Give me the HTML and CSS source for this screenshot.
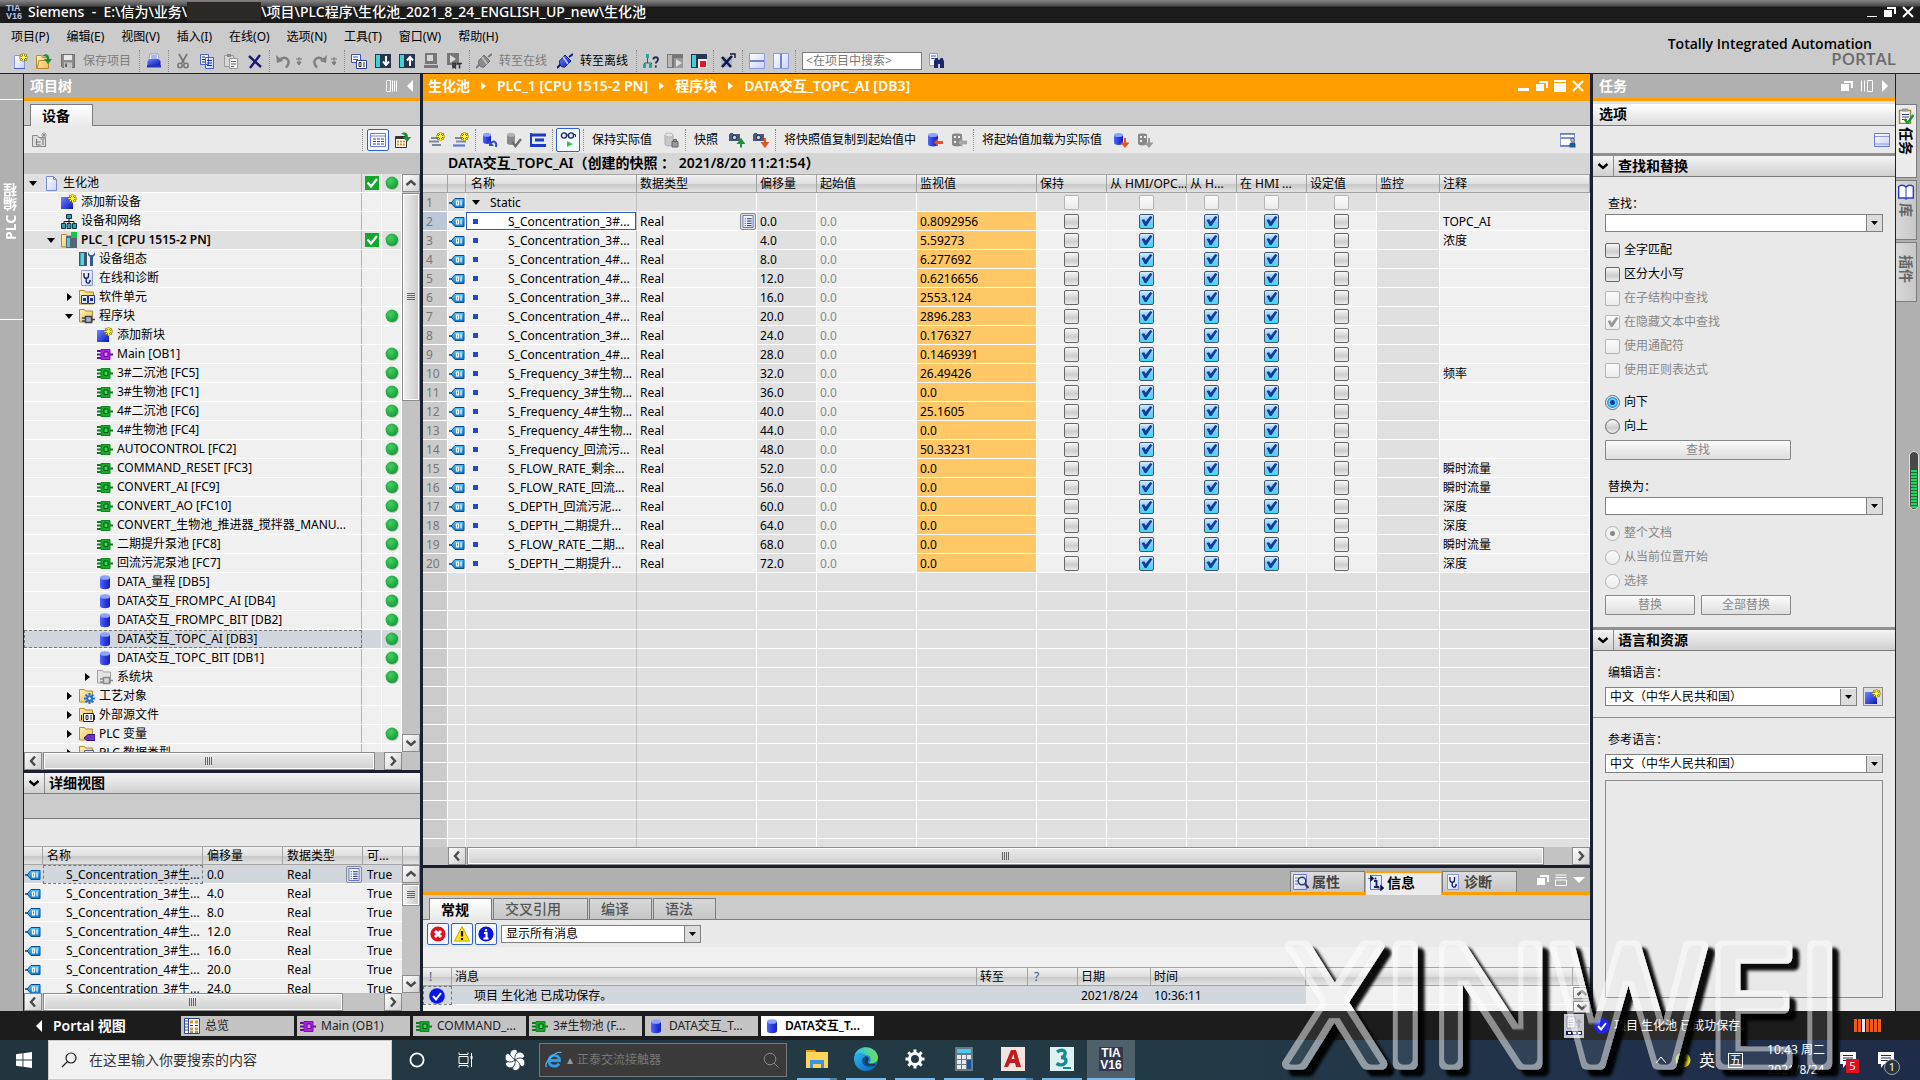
FILE: index.html
```html
<!DOCTYPE html>
<html lang="zh-CN">

<head>
  <meta charset="UTF-8">
  <title>Siemens - 生化池</title>
  <link rel="stylesheet" href="styles.css">
</head>

<body>
  <!-- Icon sprite -->
  <svg class="sprite" aria-hidden="true">
    <defs>
      <linearGradient id="g-blue" x1="0" y1="0" x2="1" y2="1"><stop offset="0" stop-color="#6f86ff"/><stop offset="1" stop-color="#0a18b8"/></linearGradient>
      <linearGradient id="g-db" x1="0" y1="0" x2="1" y2="0"><stop offset="0" stop-color="#5068f4"/><stop offset=".5" stop-color="#2a3ce4"/><stop offset="1" stop-color="#1424b0"/></linearGradient>
      <linearGradient id="g-folder" x1="0" y1="0" x2="1" y2="1"><stop offset="0" stop-color="#fff2b8"/><stop offset="1" stop-color="#e8bd5a"/></linearGradient>
      <linearGradient id="g-page" x1="0" y1="0" x2="1" y2="1"><stop offset="0" stop-color="#fff"/><stop offset="1" stop-color="#c8d2f8"/></linearGradient>
      <linearGradient id="g-tag" x1="0" y1="0" x2="0" y2="1"><stop offset="0" stop-color="#4cc4ff"/><stop offset="1" stop-color="#0b7ad0"/></linearGradient>
      <radialGradient id="g-dot" cx=".4" cy=".35" r=".7"><stop offset="0" stop-color="#45cf62"/><stop offset="1" stop-color="#129a35"/></radialGradient>
      <linearGradient id="g-edge" x1="0" y1="0" x2="1" y2="1"><stop offset="0" stop-color="#35c1f1"/><stop offset=".5" stop-color="#1b8fdb"/><stop offset="1" stop-color="#0c59a4"/></linearGradient>
      <linearGradient id="g-edge2" x1="0" y1="0" x2="1" y2="0"><stop offset="0" stop-color="#2fc3ef"/><stop offset="1" stop-color="#6fe05a"/></linearGradient>
      <filter id="emboss" x="-5%" y="-10%" width="112%" height="125%">
        <feMorphology in="SourceAlpha" operator="erode" radius="5" result="inner"/>
        <feComposite in="SourceAlpha" in2="inner" operator="out" result="ring"/>
        <feFlood flood-color="#fff" flood-opacity=".5"/>
        <feComposite in2="ring" operator="in" result="outline"/>
        <feFlood flood-color="#fff" flood-opacity=".08"/>
        <feComposite in2="inner" operator="in" result="body"/>
        <feGaussianBlur in="SourceAlpha" stdDeviation="1.5"/>
        <feOffset dx="7" dy="7"/>
        <feComposite in2="SourceAlpha" operator="out" result="cast"/>
        <feFlood flood-color="#000" flood-opacity=".95"/>
        <feComposite in2="cast" operator="in" result="shadow"/>
        <feMerge><feMergeNode in="shadow"/><feMergeNode in="body"/><feMergeNode in="outline"/></feMerge>
      </filter>
    </defs>

    <symbol id="i-star" viewBox="0 0 16 16"><path d="M11.5 0v9M7 4.5h9M8.3 1.3l6.4 6.4M14.7 1.3L8.3 7.7" stroke="#8a8200" stroke-width="1.8"/><path d="M11.5 .5v8M7.5 4.5h8M8.8 1.8l5.4 5.4M14.2 1.8L8.8 7.2" stroke="#fff23a" stroke-width="1"/></symbol>
    <symbol id="i-new" viewBox="0 0 16 16"><path d="M2.5 2.5h7l3 3v10h-10z" fill="url(#g-page)" stroke="#8a9ae0"/><path d="M2 15.5h11" stroke="#4a5fd0"/><use href="#i-star"/></symbol>
    <symbol id="i-open" viewBox="0 0 16 16"><path d="M.5 2.5h5l1 2h6v11h-12z" fill="url(#g-folder)" stroke="#b98a2c"/><path d="M1 15.5l2-8h9" fill="none" stroke="#b98a2c"/><path d="M6 3c4-3 7-2 7.5 3H16l-4 5-4-5h3C10.5 3.5 9 2.5 6 3z" fill="#1d8f3c"/></symbol>
    <symbol id="i-save" viewBox="0 0 16 16"><path d="M1.5 1.5h13v13h-12l-1-1z" fill="#8c8c8c" stroke="#6f6f6f"/><path d="M4 2h8v5H4z" fill="#e8e8e8"/><path d="M4 9.5h8V15H4z" fill="#c4c4c4"/><path d="M5 10.5h2V14H5z" fill="#666"/></symbol>
    <symbol id="i-print" viewBox="0 0 16 16"><path d="M4 1h8l1 6H3z" fill="#fff" stroke="#7a88d0" stroke-width=".8"/><path d="M5 3h6M5 5h6" stroke="#5a6ad8"/><path d="M1.5 8l2-2h9l2 2v4h-13z" fill="url(#g-blue)"/><path d="M1 12h14v2.5H1z" fill="#2335b8"/></symbol>
    <symbol id="i-cut" viewBox="0 0 16 16"><path d="M4 1l5 9M12 1l-5 9" stroke="#777" stroke-width="1.8"/><circle cx="5" cy="12.5" r="2.2" fill="none" stroke="#777" stroke-width="1.5"/><circle cx="11" cy="12.5" r="2.2" fill="none" stroke="#777" stroke-width="1.5"/></symbol>
    <symbol id="i-copy" viewBox="0 0 16 16"><path d="M1.5 1.5h8v10h-8zM6.5 4.5h8v11h-8z" fill="url(#g-page)" stroke="#4a5fd0"/><path d="M3 4h3M3 6.5h3M3 9h3M8 7.5h5M8 10h5M8 12.5h5" stroke="#222c88"/></symbol>
    <symbol id="i-paste" viewBox="0 0 16 16"><path d="M1.5 2.5h9v11h-9z" fill="#d8d8d8" stroke="#9a9a9a"/><path d="M4 1h4v3H4z" fill="#888"/><path d="M6.5 5.5h8v10h-8z" fill="#f2f2f2" stroke="#9a9a9a"/><path d="M8 8.5h5M8 11h5M8 13.5h3" stroke="#666"/></symbol>
    <symbol id="i-x" viewBox="0 0 16 16"><path d="M2 3l12 11M13 2L3 15" stroke="#1a1a72" stroke-width="2.4"/></symbol>
    <symbol id="i-undo" viewBox="0 0 16 16"><path d="M4 6.500c6-4.500 12 1 6 8" fill="none" stroke="#808080" stroke-width="2.4"/><path d="M0 2l1 8 6-2z" fill="#808080"/></symbol>
    <symbol id="i-redo" viewBox="0 0 16 16"><path d="M12 6.500C6 2 0 7.500 6 14.500" fill="none" stroke="#808080" stroke-width="2.4"/><path d="M16 2l-1 8-6-2z" fill="#808080"/></symbol>
    <symbol id="i-drop" viewBox="0 0 8 16"><path d="M4 4v4M1 6h6M2 9h4l-2 3z" fill="#777" stroke="#777"/></symbol>
    <symbol id="i-compile" viewBox="0 0 16 16"><path d="M.5 1.5h9v8h-9z" fill="#fff" stroke="#3a4fc0"/><path d="M2 4h5M2 6.5h5" stroke="#3a4fc0"/><path d="M5.5 7.5h10v8h-10z" fill="#fff" stroke="#2a3f98"/><path d="M8 9.5h2v4H8zM13 9v5" fill="none" stroke="#222"/></symbol>
    <symbol id="i-down" viewBox="0 0 16 16"><path d="M0 1h16v14H0z" fill="#28354e"/><path d="M1 2h4v12H1z" fill="#3fd0d8"/><path d="M11 3v8M8 8.5l3 3.5 3-3.5" fill="none" stroke="#fff" stroke-width="2"/></symbol>
    <symbol id="i-up" viewBox="0 0 16 16"><path d="M0 1h16v14H0z" fill="#28354e"/><path d="M1 2h4v12H1z" fill="#3fd0d8"/><path d="M11 13V5M8 7.5L11 4l3 3.5" fill="none" stroke="#fff" stroke-width="2"/></symbol>
    <symbol id="i-sim" viewBox="0 0 16 16"><path d="M2 0h12v11H2z" fill="#777"/><path d="M4 2h6v6H4z" fill="#d4d4d4"/><path d="M1 12h14v3H1z" fill="#777"/></symbol>
    <symbol id="i-rt" viewBox="0 0 16 16"><path d="M0 0h12v12H0z" fill="#777"/><path d="M3 2l6 4-6 4z" fill="#ddd"/><path d="M6 15.5v-5h2.5v2.5H6.500l2.500 2.500M10 10.5h5M12.5 10.5v5" fill="none" stroke="#333" stroke-width="1.5"/></symbol>
    <symbol id="i-plug-g" viewBox="0 0 16 16"><path d="M0 15l4-4M12 4l4-3" stroke="#777" stroke-width="2"/><path d="M2.5 8l5.5-6 6 6-6 6c-3 1-6-2-5.5-6z" fill="#8c8c8c" stroke="#6c6c6c"/><path d="M6 4l5 7" stroke="#c4c4c4" stroke-width="1.5"/></symbol>
    <symbol id="i-plug" viewBox="0 0 16 16"><path d="M0 15l4-4M12 4l4-3" stroke="#101a80" stroke-width="2"/><path d="M2.5 8l5.5-6 6 6-6 6c-3 1-6-2-5.5-6z" fill="url(#g-blue)" stroke="#101a80"/><path d="M6 4l5 7" stroke="#cfd8ff" stroke-width="1.3"/></symbol>
    <symbol id="i-nethelp" viewBox="0 0 16 16"><path d="M4.5 4v6M1.5 14v-4h7v4" fill="none" stroke="#1d6a6a"/><path d="M3 1h3v4H3zM0 11h3v4H0zM6 11h3v4H6z" fill="#1fa89c"/><path d="M10.5 6.500c0-3 4.500-3 4.500 0 0 2-2.200 2-2.200 4M12.800 12.500v2" fill="none" stroke="#222b55" stroke-width="1.8"/></symbol>
    <symbol id="i-start" viewBox="0 0 16 16"><path d="M0 1h16v14H0z" fill="#777"/><path d="M1 2h4v12H1z" fill="#b8b8b8"/><path d="M7 5h9v10H7z" fill="#999"/><path d="M9 6l6 4-6 4z" fill="#ddd"/></symbol>
    <symbol id="i-stop" viewBox="0 0 16 16"><path d="M0 1h16v14H0z" fill="#28354e"/><path d="M1 2h4v12H1z" fill="#3fd0d8"/><path d="M7 6h9v9H7z" fill="#eee"/><path d="M9 8h6v6H9z" fill="#e8141c"/></symbol>
    <symbol id="i-xref" viewBox="0 0 16 16"><path d="M1 4h11v10H1z" fill="#a8b4dc"/><path d="M2 4l9 10M12 3L2 14" stroke="#14143c" stroke-width="2.6"/><path d="M10 1h5v4" fill="none" stroke="#14143c" stroke-width="1.4"/></symbol>
    <symbol id="i-splith" viewBox="0 0 16 16"><path d="M.5 .5h15v15H.5z" fill="url(#g-page)" stroke="#8a9ae0"/><path d="M1 8h14" stroke="#4a5fd0" stroke-width="1.5"/></symbol>
    <symbol id="i-splitv" viewBox="0 0 16 16"><path d="M.5 .5h15v15H.5z" fill="url(#g-page)" stroke="#8a9ae0"/><path d="M8 1v14" stroke="#4a5fd0" stroke-width="1.5"/></symbol>
    <symbol id="i-find" viewBox="0 0 16 16"><path d="M.5 .5h8v12h-8z" fill="#f2f4ff" stroke="#8a9ae0"/><path d="M2 3h5M2 5.5h5" stroke="#4a5fd0"/><path d="M5 8l1.500-3h2l1 2h1l1-2h2L15 8v7h-4v-4H9v4H5z" fill="#1c2768"/></symbol>

    <symbol id="i-tree-new" viewBox="0 0 16 16"><path d="M.5 3.5h5l1 2h7v9H.5z" fill="#ddd" stroke="#8a8a8a"/><path d="M4.5 7v6h4M4.5 10h4M11 8v5M8.5 7h4" fill="none" stroke="#777"/><path d="M12 0v6M9 3h6M10 1l4 4M14 1l-4 4" stroke="#888" stroke-width=".8"/></symbol>
    <symbol id="i-grid" viewBox="0 0 16 16"><path d="M.5 1.5h15v13H.5z" fill="#fff" stroke="#6a7ad0"/><path d="M1 4h14" stroke="#b4bff0" stroke-width="2"/><path d="M3 7h3M7 7h3M11 7h3M3 9.5h3M7 9.5h3M11 9.5h3M3 12h3M7 12h3M11 12h3" stroke="#39407c"/></symbol>
    <symbol id="i-gridgo" viewBox="0 0 16 16"><path d="M.5 4.5h11v11H.5z" fill="#fff" stroke="#333"/><path d="M1 6h10" stroke="#333" stroke-width="2"/><path d="M2 9.5h2M5 9.5h2M8 9.5h2M2 12.5h2M5 12.5h2M8 12.5h2" stroke="#e8902a" stroke-width="2"/><path d="M6 2c4-3 7-1 7 3h3l-4 5-4-5h2C10 3 8.500 2 6 2z" fill="#1d8f3c"/></symbol>

    <symbol id="i-page" viewBox="0 0 16 16"><path d="M3.5 1.5h7l3 3v11h-10z" fill="url(#g-page)" stroke="#7a8ad8"/><path d="M10.5 1.5v3h3" fill="none" stroke="#7a8ad8"/></symbol>
    <symbol id="i-add" viewBox="0 0 16 16"><path d="M0 3h12v12H0z" fill="url(#g-blue)"/><use href="#i-star"/></symbol>
    <symbol id="i-net" viewBox="0 0 16 16"><path d="M8 5v4M3 12V8.5h10V12M8 8v5" fill="none" stroke="#111"/><path d="M5.5 1.5h5v4h-5zM.5 10.5h4v5h-4zM6 10.5h4v5H6zM11.5 10.5h4v5h-4z" fill="#3aa0a8" stroke="#12304a"/></symbol>
    <symbol id="i-plc" viewBox="0 0 16 16"><path d="M.5 2.5h5l1 1.5h5v11H.5z" fill="url(#g-folder)" stroke="#b98a2c"/><path d="M5 4h11v12H5z" fill="#5a6478"/><path d="M6 6h3v9H6z" fill="#3fd0d8"/><path d="M10 0h6v6h-6z" fill="#0fc840"/></symbol>
    <symbol id="i-conf" viewBox="0 0 16 16"><path d="M0 1h8v14H0z" fill="#465468"/><path d="M1.5 2H5v12H1.5z" fill="#3fe0ea"/><path d="M9 1v3l2 2v9h3V6l2-2V1l-2 3h-3z" fill="#2c5c98"/></symbol>
    <symbol id="i-diag" viewBox="0 0 16 16"><path d="M2.5 .5h11v15h-11z" fill="url(#g-page)" stroke="#8a9ae0"/><path d="M5 3v3c0 3 4.500 3 4.500 0V3M7.200 8.500v3c0 2 3 2 3.500 .5" fill="none" stroke="#111a50" stroke-width="1.3"/><circle cx="11" cy="11" r="1" fill="#111a50"/></symbol>
    <symbol id="i-unit" viewBox="0 0 16 16"><path d="M.5 1.5h5l1 1.5h8v12H.5z" fill="url(#g-folder)" stroke="#b98a2c"/><path d="M2.5 6.5h6v8h-6zM9.5 6.5h6v8h-6z" fill="#dfe6ff" stroke="#24348c"/><path d="M4 9h3v3H4zM11 9h3v3h-3z" fill="#24348c"/></symbol>
    <symbol id="i-blocks" viewBox="0 0 16 16"><path d="M.5 1.5h5l1 1.5h7v11H.5z" fill="url(#g-folder)" stroke="#b98a2c"/><path d="M3 10h3M3 13h3M13 11.5h3" stroke="#39435c" stroke-width="1.5"/><path d="M6.500 8.500h6v6h-6z" fill="#aab4c8" stroke="#39435c" stroke-width="1.5"/></symbol>
    <symbol id="i-sysblocks" viewBox="0 0 16 16"><path d="M.5 1.5h5l1 1.5h7v11H.5z" fill="#e4e4e4" stroke="#a0a0a0"/><path d="M3 10h3M3 13h3M13 11.5h3" stroke="#8a8a8a" stroke-width="1.5"/><path d="M6.500 8.500h6v6h-6z" fill="#d8d8d8" stroke="#8a8a8a" stroke-width="1.5"/></symbol>
    <symbol id="i-ob" viewBox="0 0 16 16"><path d="M0 5h4M0 8.500h4M0 12h4M12 8.500h4" stroke="#6a0c9c" stroke-width="1.8"/><path d="M4 3.500h9v10H4z" fill="#b01ee8" stroke="#7a10b0"/><path d="M7 6h4v4.500H7z" fill="#d87cf8" stroke="#5c0888"/></symbol>
    <symbol id="i-fc" viewBox="0 0 16 16"><path d="M0 5h4M0 8.500h4M0 12h4M12 8.500h4" stroke="#0a7a1a" stroke-width="1.8"/><path d="M4 3.500h9v10H4z" fill="#17a82c" stroke="#0c8a1c"/><path d="M7 6h4v4.500H7z" fill="#2ce04a" stroke="#08501a"/></symbol>
    <symbol id="i-db" viewBox="0 0 16 16"><path d="M3 3.500v9.500c0 3 10 3 10 0V3.500z" fill="url(#g-db)"/><ellipse cx="8" cy="3.500" rx="5" ry="2.3" fill="#8fa0ff"/></symbol>
    <symbol id="i-tech" viewBox="0 0 16 16"><path d="M.5 1.5h5l1 1.5h7v11H.5z" fill="url(#g-folder)" stroke="#b98a2c"/><path d="M10.5 5v11M5 10.5h11M6.600 6.600l7.800 7.800M14.400 6.600l-7.800 7.800" stroke="#1f70d8" stroke-width="2"/><circle cx="10.5" cy="10.5" r="1.2" fill="#fff"/></symbol>
    <symbol id="i-ext" viewBox="0 0 16 16"><path d="M.5 1.5h5l1 1.5h7v11H.5z" fill="url(#g-folder)" stroke="#b98a2c"/><path d="M4.5 6.5h10v8h-10z" fill="#fff" stroke="#223"/><path d="M7 8.5h2v4H7zM12 8v5" fill="none" stroke="#223"/><path d="M2.5 8v5M15.5 8v5" stroke="#223"/></symbol>
    <symbol id="i-var" viewBox="0 0 16 16"><path d="M.5 1.5h5l1 1.5h7v11H.5z" fill="url(#g-folder)" stroke="#b98a2c"/><path d="M5 12l4-3.500h7v6H8z" fill="#6a34c8" stroke="#341478"/></symbol>
    <symbol id="i-types" viewBox="0 0 16 16"><path d="M.5 1.5h5l1 1.5h7v11H.5z" fill="url(#g-folder)" stroke="#b98a2c"/><path d="M5.5 5.5h9v9h-9z" fill="#dfe6ff" stroke="#4a5fc0"/></symbol>
    <symbol id="i-ok" viewBox="0 0 14 14"><path d="M0 0h14v14H0z" fill="#12a82c"/><path d="M2.5 6.500l3.500 4 6-7.500" fill="none" stroke="#fff" stroke-width="2.2"/></symbol>
    <symbol id="i-dot" viewBox="0 0 14 14"><circle cx="7.4" cy="7.4" r="6.4" fill="#a8b8ac"/><circle cx="6.8" cy="6.8" r="6.2" fill="url(#g-dot)"/></symbol>
    <symbol id="i-tag" viewBox="0 0 16 16"><path d="M0 8h3" stroke="#0a3c70" stroke-width="1.5"/><path d="M2 8l4-4.500h9v9H6z" fill="url(#g-tag)" stroke="#0a4c8c"/><path d="M7.500 6h2v4h-2zM12 5.500v5" fill="none" stroke="#fff" stroke-width="1.2"/></symbol>
    <symbol id="i-list" viewBox="0 0 12 14"><path d="M.5 .5h11v13H.5z" fill="#eef1ff" stroke="#5a6ad0"/><path d="M2.5 4h1M2.5 6.5h1M2.5 9h1M2.5 11.5h1M5 4h5M5 6.5h5M5 9h5M5 11.5h5" stroke="#1c2460"/></symbol>

    <symbol id="i-addrow" viewBox="0 0 16 16"><path d="M2 6h8M0 9.5h10M3 13h9" stroke="#7c889c" stroke-width="2.2"/><use href="#i-star"/></symbol>
    <symbol id="i-addrow2" viewBox="0 0 16 16"><path d="M2 6h8M3 9.5h10" stroke="#7c889c" stroke-width="2.2"/><path d="M0 13.5h12" stroke="#5c78d8" stroke-width="2.2"/><use href="#i-star"/></symbol>
    <symbol id="i-dbundo" viewBox="0 0 16 16"><path d="M1 3v7c0 2.500 8 2.500 8 0V3z" fill="url(#g-db)"/><ellipse cx="5" cy="2.8" rx="4" ry="2" fill="#8fa0ff"/><path d="M9 11c3-3 6-1 5 4" fill="none" stroke="#2a50c0" stroke-width="2"/><path d="M7 8v6h5z" fill="#2a50c0"/></symbol>
    <symbol id="i-dbok" viewBox="0 0 16 16"><path d="M1 3v8c0 2.500 8 2.500 8 0V3z" fill="#888"/><ellipse cx="5" cy="2.8" rx="4" ry="2" fill="#b4b4b4"/><path d="M6 10l3.500 4L15 7" fill="none" stroke="#6c6c6c" stroke-width="2.4"/></symbol>
    <symbol id="i-lines" viewBox="0 0 16 16"><path d="M1 1v14" stroke="#1c3cc8" stroke-width="2"/><path d="M1 3h15M5 8h9M1 13.500h15" stroke="#1c3cc8" stroke-width="3"/></symbol>
    <symbol id="i-glasses" viewBox="0 0 16 16"><circle cx="4" cy="3.5" r="2.6" fill="#e8eeff" stroke="#1c2a5c" stroke-width="1.4"/><circle cx="11" cy="3.5" r="2.6" fill="#e8eeff" stroke="#1c2a5c" stroke-width="1.4"/><path d="M6.5 3h2M13.5 2.5h2V5" fill="none" stroke="#1c2a5c"/><path d="M7 9l6 3-6 3z" fill="#2cc84c"/></symbol>
    <symbol id="i-dblock" viewBox="0 0 16 16"><path d="M2 3v9c0 2.500 8 2.500 8 0V3z" fill="#c8c8c8" stroke="#aaa"/><ellipse cx="6" cy="3" rx="4" ry="2" fill="#e4e4e4" stroke="#aaa" stroke-width=".7"/><path d="M9 9.5h6V15H9zM10.5 9.5v-2h3v2" fill="#999" stroke="#666"/></symbol>
    <symbol id="i-camup" viewBox="0 0 16 16"><path d="M0 2h11v7H0z" fill="#4c5a78"/><path d="M1 1h3v1H1z" fill="#4c5a78"/><circle cx="5.5" cy="5.5" r="2.2" fill="#c8d4f0" stroke="#1c2440"/><path d="M12 15.5V11M9.500 11L12 7.500l2.500 3.500z" stroke="#1a9440" stroke-width="2" fill="#1a9440"/></symbol>
    <symbol id="i-camdn" viewBox="0 0 16 16"><path d="M0 2h11v7H0z" fill="#4c5a78"/><path d="M1 1h3v1H1z" fill="#4c5a78"/><circle cx="5.5" cy="5.5" r="2.2" fill="#c8d4f0" stroke="#1c2440"/><path d="M12 6v5M9.500 11h5L12 14.500z" stroke="#e05820" stroke-width="2" fill="#e05820"/></symbol>
    <symbol id="i-dbleft" viewBox="0 0 16 16"><path d="M1 3v9.500c0 2.500 10 2.500 10 0V3z" fill="url(#g-db)"/><ellipse cx="6" cy="3" rx="5" ry="2" fill="#8fa0ff"/><path d="M7 10.5l4-4v2.500h5v3h-5v2.500z" fill="#e85420"/></symbol>
    <symbol id="i-dbleftg" viewBox="0 0 16 16"><path d="M1 2.500c0-1.500 10-1.500 10 0v10c0 2.500-10 2.500-10 0z" fill="#888"/><path d="M3 4h2v2H3zM3 9h2v2H3zM7 4h2v2H7z" fill="#eee"/><path d="M7 10.5l4-4v2.500h5v3h-5v2.500z" fill="#aaa" stroke="#888" stroke-width=".5"/></symbol>
    <symbol id="i-dbdown" viewBox="0 0 16 16"><path d="M1 3v8c0 2.500 9 2.500 9 0V3z" fill="url(#g-db)"/><ellipse cx="5.5" cy="3" rx="4.5" ry="2" fill="#8fa0ff"/><path d="M12 6v6M9.500 11.500h5L12 14.500z" stroke="#e85420" stroke-width="2" fill="#e85420"/></symbol>
    <symbol id="i-dbdowng" viewBox="0 0 16 16"><path d="M1 2.500c0-1.500 9-1.500 9 0v9c0 2.500-9 2.500-9 0z" fill="#888"/><path d="M3 4h2v2H3zM3 8h2v2H3zM7 4h2v2H7z" fill="#eee"/><path d="M12 6v6M9.500 11.500h5L12 14.500z" stroke="#999" stroke-width="2" fill="#999"/></symbol>
    <symbol id="i-layout" viewBox="0 0 16 16"><path d="M.5 1.5h14v12H.5z" fill="#fff" stroke="#8a9ae0"/><path d="M0 2h15M1 6h13M0 14h12" stroke="#5c70c8" stroke-width="1.5"/><circle cx="12.5" cy="8" r="1.8" fill="#e8b888" stroke="#333" stroke-width=".6"/><path d="M9.5 15.5v-3c0-3 6-3 6 0v3z" fill="#145c98"/></symbol>
    <symbol id="i-window" viewBox="0 0 16 16"><path d="M.5 1.5h15v13H.5z" fill="url(#g-page)" stroke="#6a7ad8"/><path d="M1 4.5h14M1 12h14" stroke="#8a9ae8"/></symbol>

    <symbol id="i-wmin" viewBox="0 0 12 12"><path d="M0 8h11v3H0z" fill="#fff"/></symbol>
    <symbol id="i-wline" viewBox="0 0 12 12"><path d="M1 10h10v1H1z" fill="#fff"/></symbol>
    <symbol id="i-wrest" viewBox="0 0 12 12"><path d="M0 4h8v7H0zM3 1h9v7h-2V3H3z" fill="#fff"/></symbol>
    <symbol id="i-wmax" viewBox="0 0 12 12"><path d="M0 0h12v2H0zM0 3h12v9H0z" fill="#fff"/></symbol>
    <symbol id="i-wclose" viewBox="0 0 12 12"><path d="M1 1l10 10M11 1L1 11" stroke="#fff" stroke-width="2"/></symbol>
    <symbol id="i-cols" viewBox="0 0 12 12"><path d="M.5 .5v11M3.5 .5v11M6.5 .5h5v11h-5z" fill="none" stroke="#fff"/></symbol>
    <symbol id="i-cols-l" viewBox="0 0 12 12"><path d="M.5 .5h4v11h-4zM6.5 .5v11M8.5 .5v11M10.5 .5v11" fill="none" stroke="#fff"/></symbol>
    <symbol id="i-rows" viewBox="0 0 12 12"><path d="M.5 1h11M.5 3.5h11M.5 6h11v5.5H.5z" fill="none" stroke="#fff"/></symbol>
    <symbol id="i-tleft" viewBox="0 0 8 12"><path d="M7 0v12L1 6z" fill="#fff"/></symbol>
    <symbol id="i-tright" viewBox="0 0 8 12"><path d="M1 0v12l6-6z" fill="#fff"/></symbol>
    <symbol id="i-tdown" viewBox="0 0 12 12"><path d="M0 3h12L6 9z" fill="#fff"/></symbol>
    <symbol id="i-chev" viewBox="0 0 12 12"><path d="M1.5 4L6 8l4.500-4" fill="none" stroke="currentColor" stroke-width="2.4"/></symbol>

    <symbol id="i-prop" viewBox="0 0 16 16"><path d="M.5 .5h13v15H.5z" fill="url(#g-page)" stroke="#6a7ad8"/><path d="M2 4h4M2 7h3M2 10h3" stroke="#5c70d8"/><circle cx="9" cy="7" r="3.8" fill="#dfe6f4" stroke="#333b58" stroke-width="1.5"/><path d="M12 10l3.500 4" stroke="#333b58" stroke-width="2"/></symbol>
    <symbol id="i-info" viewBox="0 0 16 16"><path d="M2.5 .5h11v14h-11z" fill="url(#g-page)" stroke="#6a7ad8"/><path d="M6 6h2.500v6M6 12h5M7.500 2.500v2" fill="none" stroke="#1c2260" stroke-width="1.8"/><path d="M0 3.500h3M2.500 .5L6 3.500l-3.500 3zM9 13h4M12.500 10l3.500 3-3.500 3z" fill="#10144c" stroke="#10144c" stroke-width=".6"/></symbol>
    <symbol id="i-err" viewBox="0 0 16 16"><circle cx="8" cy="8" r="7.6" fill="#e0101c"/><path d="M5 5l6 6M11 5l-6 6" stroke="#fff" stroke-width="3"/></symbol>
    <symbol id="i-warn" viewBox="0 0 16 16"><path d="M8 .5L15.500 15H.5z" fill="#ffe60a" stroke="#c8a800"/><path d="M8 5v5.500M8 12v2" stroke="#111" stroke-width="2.2"/></symbol>
    <symbol id="i-note" viewBox="0 0 16 16"><circle cx="8" cy="8" r="7.6" fill="#0a14e0"/><path d="M6 7h2.500v5M5.500 12.500h5M8 3v2.300" fill="none" stroke="#fff" stroke-width="2.2"/></symbol>
    <symbol id="i-done" viewBox="0 0 16 16"><circle cx="8" cy="8" r="7.8" fill="#0c14e8"/><path d="M4 8l3 3.500L12 5" fill="none" stroke="#fff" stroke-width="2"/></symbol>
    <symbol id="i-task" viewBox="0 0 16 16"><path d="M1.5 2.5h11v13h-11z" fill="#fff" stroke="#a08840" stroke-width="1.5"/><path d="M4 .5h6v3H4z" fill="#999"/><path d="M4 6.500h7M4 9h7M4 11.5h5" stroke="#333c90"/><path d="M6.500 11l3 4L15.500 7" fill="none" stroke="#18942c" stroke-width="2.4"/></symbol>
    <symbol id="i-book" viewBox="0 0 16 16"><path d="M.7 2.500C3 1 6 1 8 3c2-2 5-2 7.300-.5V14H9l-1 1-1-1H.7z" fill="#fff" stroke="#2c3cc8" stroke-width="1.4"/><path d="M8 3v11" stroke="#2c3cc8"/></symbol>
    <symbol id="i-overview" viewBox="0 0 16 16"><path d="M.5 .5h15v15H.5z" fill="#fff" stroke="#2c4890"/><path d="M1 3h3M1 6h3M1 9h3M1 12h3M4.500 0v16" stroke="#2c4890"/><path d="M6 4h3M11 4h3M6 11h3M11 11h3" stroke="#d8942c" stroke-width="3"/><path d="M6 7.500h3M11 7.500h3M6 14h3M11 14h3" stroke="#333"/></symbol>
    <symbol id="i-status" viewBox="0 0 20 24"><path d="M0 0h20v24H0z" fill="#c4c4cc"/><path d="M3 3h8v11H3z" fill="#fff" stroke="#8890b0"/><path d="M4.5 6h5M4.5 8.5h5M4.5 11h5M15 14V6M12.5 9L15 5.500 17.500 9" fill="none" stroke="#8890b0"/><path d="M2 17h16v4H2z" fill="#10184c"/><path d="M4 18h3v2H4zM9 18h3v2H9zM14 18h3v2h-3z" fill="#fff"/></symbol>
  </svg>

  <header class="titlebar">
    <span class="tia-badge">TIA<br>V16</span>
    <span class="title">Siemens&nbsp; -&nbsp; E:\信为\业务\</span><span class="blot"></span><span class="title">\项目\PLC程序\生化池_2021_8_24_ENGLISH_UP_new\生化池</span>
    <div class="win-buttons">
      <button aria-label="最小化"><svg class="wicon"><use href="#i-wline"/></svg></button>
      <button aria-label="还原"><svg class="wicon"><use href="#i-wrest"/></svg></button>
      <button aria-label="关闭"><svg class="wicon"><use href="#i-wclose"/></svg></button>
    </div>
  </header>

  <div class="topbar">
    <div class="topbar-left">
      <nav class="menu">
        <button>项目(P)</button><button>编辑(E)</button><button>视图(V)</button><button>插入(I)</button><button>在线(O)</button><button>选项(N)</button><button>工具(T)</button><button>窗口(W)</button><button>帮助(H)</button>
      </nav>
      <div class="toolbar" id="main-toolbar"></div>
    </div>
    <div class="brand">
      <div class="brand-name">Totally Integrated Automation</div>
      <div class="brand-portal">PORTAL</div>
    </div>
  </div>

  <main class="workspace">
    <aside class="rail rail-left"><div class="rail-label">PLC 编程</div></aside>

    <section class="left">
      <div class="panel-head">
        <span>项目树</span>
        <svg class="wicon"><use href="#i-cols-l"/></svg>
        <svg class="wicon narrow"><use href="#i-tleft"/></svg>
      </div>
      <div class="tabstrip"><button class="tab active">设备</button></div>
      <div class="panel-tools">
        <button class="tool" aria-label="新建组"><svg class="icon"><use href="#i-tree-new"/></svg></button>
        <span class="spacer"></span><span class="sep"></span>
        <button class="tool pressed" aria-label="详细"><svg class="icon"><use href="#i-grid"/></svg></button>
        <button class="tool" aria-label="总览"><svg class="icon"><use href="#i-gridgo"/></svg></button>
      </div>
      <div class="band"></div>
      <div class="tree-area">
        <div class="tree" id="tree"></div>
        <div class="vscroll">
          <button class="sbtn up" aria-label="向上滚动"><svg class="wicon"><use href="#i-chev"/></svg></button>
          <div class="thumb tree-thumb"><i class="grip"></i></div>
          <span class="spacer"></span>
          <button class="sbtn" aria-label="向下滚动"><svg class="wicon"><use href="#i-chev"/></svg></button>
        </div>
      </div>
      <div class="hscroll tree-hscroll">
        <button class="sbtn prev" aria-label="向左滚动"><svg class="wicon"><use href="#i-chev"/></svg></button>
        <div class="thumb"><i class="grip"></i></div>
        <button class="sbtn next" aria-label="向右滚动"><svg class="wicon"><use href="#i-chev"/></svg></button>
      </div>

      <div class="detail">
        <h2 class="section-head"><span class="fold"><svg class="wicon"><use href="#i-chev"/></svg></span>详细视图</h2>
        <div class="detail-strip"></div>
        <div class="detail-tools"></div>
        <div class="detail-area">
          <table class="grid detail-table">
            <colgroup><col class="d-icon"><col class="d-name"><col class="d-off"><col class="d-type"><col class="d-vis"><col></colgroup>
            <thead><tr><th></th><th>名称</th><th>偏移量</th><th>数据类型</th><th>可...</th><th></th></tr></thead>
            <tbody id="detail-rows"></tbody>
          </table>
          <div class="vscroll over">
            <button class="sbtn up" aria-label="向上滚动"><svg class="wicon"><use href="#i-chev"/></svg></button>
            <div class="thumb detail-thumb"><i class="grip"></i></div>
            <span class="spacer"></span>
            <button class="sbtn" aria-label="向下滚动"><svg class="wicon"><use href="#i-chev"/></svg></button>
          </div>
        </div>
        <div class="hscroll detail-hscroll">
          <button class="sbtn prev" aria-label="向左滚动"><svg class="wicon"><use href="#i-chev"/></svg></button>
          <div class="thumb"><i class="grip"></i></div>
          <span class="spacer"></span>
          <button class="sbtn next" aria-label="向右滚动"><svg class="wicon"><use href="#i-chev"/></svg></button>
        </div>
      </div>
    </section>

    <section class="center">
      <div class="editor">
        <div class="editor-head">
          <div class="crumbs"><span>生化池</span><i></i><span>PLC_1 [CPU 1515-2 PN]</span><i></i><span>程序块</span><i></i><span>DATA交互_TOPC_AI [DB3]</span></div>
          <div class="win-buttons">
            <button aria-label="最小化"><svg class="wicon"><use href="#i-wmin"/></svg></button>
            <button aria-label="浮动"><svg class="wicon"><use href="#i-wrest"/></svg></button>
            <button aria-label="最大化"><svg class="wicon"><use href="#i-wmax"/></svg></button>
            <button aria-label="关闭"><svg class="wicon"><use href="#i-wclose"/></svg></button>
          </div>
        </div>
        <div class="tabstrip"></div>
        <div class="editor-tools" id="editor-toolbar"></div>
        <h1 class="editor-title">DATA交互_TOPC_AI（创建的快照&nbsp;：&nbsp;2021/8/20 11:21:54）</h1>
        <div class="table-area">
          <table class="grid data-table">
            <colgroup><col class="c-num"><col class="c-icon"><col class="c-name"><col class="c-type"><col class="c-off"><col class="c-start"><col class="c-mon"><col class="c-keep"><col class="c-opc"><col class="c-h"><col class="c-inhmi"><col class="c-set"><col class="c-sup"><col></colgroup>
            <thead>
              <tr><th></th><th></th><th>名称</th><th>数据类型</th><th>偏移量</th><th>起始值</th><th>监视值</th><th>保持</th><th>从 HMI/OPC...</th><th>从 H...</th><th>在 HMI ...</th><th>设定值</th><th>监控</th><th>注释</th></tr>
            </thead>
            <tbody id="data-rows"></tbody>
          </table>
        </div>
        <div class="hscroll editor-hscroll">
          <button class="sbtn prev" aria-label="向左滚动"><svg class="wicon"><use href="#i-chev"/></svg></button>
          <div class="thumb"><i class="grip"></i></div>
          <button class="sbtn next" aria-label="向右滚动"><svg class="wicon"><use href="#i-chev"/></svg></button>
        </div>
      </div>

      <div class="inspector">
        <div class="insp-head">
          <button class="insp-tab"><svg class="icon"><use href="#i-prop"/></svg>属性</button>
          <button class="insp-tab active"><svg class="icon"><use href="#i-info"/></svg>信息</button>
          <button class="insp-tab"><svg class="icon"><use href="#i-diag"/></svg>诊断</button>
          <div class="insp-icons"><svg class="wicon"><use href="#i-wrest"/></svg><svg class="wicon"><use href="#i-rows"/></svg><svg class="wicon"><use href="#i-tdown"/></svg></div>
        </div>
        <div class="tabstrip sub">
          <button class="tab active">常规</button><button class="tab wide">交叉引用</button><button class="tab">编译</button><button class="tab">语法</button>
        </div>
        <div class="msg-tools">
          <button class="tool pressed" aria-label="错误"><svg class="icon"><use href="#i-err"/></svg></button>
          <button class="tool pressed" aria-label="警告"><svg class="icon"><use href="#i-warn"/></svg></button>
          <button class="tool pressed" aria-label="信息"><svg class="icon"><use href="#i-note"/></svg></button>
          <select class="combo msg-filter" aria-label="消息筛选"><option>显示所有消息</option></select>
        </div>
        <div class="msg-area">
          <table class="grid msg-table">
            <colgroup><col class="m-flag"><col><col class="m-goto"><col class="m-q"><col class="m-date"><col class="m-time"><col class="m-rest"><col class="m-end"></colgroup>
            <thead><tr><th class="faint">!</th><th>消息</th><th>转至</th><th class="faint">?</th><th>日期</th><th>时间</th><th></th><th></th></tr></thead>
            <tbody><tr><td class="focus"><svg class="icon"><use href="#i-done"/></svg></td><td class="msg-text">项目 生化池 已成功保存。</td><td></td><td></td><td>2021/8/24</td><td>10:36:11</td><td class="plain"></td><td class="plain"></td></tr></tbody>
          </table>
          <div class="vscroll over msg-scroll">
            <button class="sbtn up" aria-label="向上滚动"><svg class="wicon"><use href="#i-chev"/></svg></button>
            <span class="spacer"></span>
            <button class="sbtn" aria-label="向下滚动"><svg class="wicon"><use href="#i-chev"/></svg></button>
          </div>
        </div>
      </div>
    </section>

    <section class="tasks">
      <div class="panel-head">
        <span>任务</span>
        <svg class="wicon"><use href="#i-wrest"/></svg>
        <svg class="wicon"><use href="#i-cols"/></svg>
        <svg class="wicon narrow"><use href="#i-tright"/></svg>
      </div>
      <h2 class="options">选项</h2>
      <div class="task-tools"><svg class="icon"><use href="#i-window"/></svg></div>
      <h2 class="section-head ruled"><span class="fold"><svg class="wicon"><use href="#i-chev"/></svg></span>查找和替换</h2>
      <form class="find">
        <label class="caption" for="find-text">查找：</label>
        <select class="combo" id="find-text"><option></option></select>
        <div class="choices">
          <label><input type="checkbox">全字匹配</label>
          <label><input type="checkbox">区分大小写</label>
          <label><input type="checkbox" disabled>在子结构中查找</label>
          <label><input type="checkbox" checked disabled>在隐藏文本中查找</label>
          <label><input type="checkbox" disabled>使用通配符</label>
          <label><input type="checkbox" disabled>使用正则表达式</label>
        </div>
        <div class="choices direction">
          <label><input type="radio" name="dir" checked>向下</label>
          <label><input type="radio" name="dir">向上</label>
        </div>
        <div class="buttons"><button type="button" disabled>查找</button></div>
        <label class="caption replace" for="replace-text">替换为：</label>
        <select class="combo" id="replace-text"><option></option></select>
        <div class="choices scope">
          <label><input type="radio" name="scope" checked disabled>整个文档</label>
          <label><input type="radio" name="scope" disabled>从当前位置开始</label>
          <label><input type="radio" name="scope" disabled>选择</label>
        </div>
        <div class="buttons"><button type="button" disabled>替换</button><button type="button" disabled>全部替换</button></div>
      </form>
      <h2 class="section-head ruled"><span class="fold"><svg class="wicon"><use href="#i-chev"/></svg></span>语言和资源</h2>
      <div class="lang">
        <label class="caption" for="edit-lang">编辑语言：</label>
        <div class="lang-row">
          <select class="combo" id="edit-lang"><option>中文（中华人民共和国）</option></select>
          <button class="add-lang" aria-label="添加语言"><svg class="icon"><use href="#i-add"/></svg></button>
        </div>
      </div>
      <div class="lang reference">
        <label class="caption" for="ref-lang">参考语言：</label>
        <select class="combo" id="ref-lang"><option>中文（中华人民共和国）</option></select>
        <div class="preview"></div>
      </div>
    </section>

    <aside class="rail rail-right">
      <button class="side-tab active"><svg class="icon"><use href="#i-task"/></svg><span>任务</span></button>
      <button class="side-tab lib"><svg class="icon"><use href="#i-book"/></svg><span>库</span></button>
      <button class="side-tab addin"><span>插件</span></button>
      <div class="meter"><i></i></div>
    </aside>
  </main>

  <footer class="portalbar">
    <button class="portal-link"><svg class="wicon narrow"><use href="#i-tleft"/></svg>Portal 视图</button>
    <div class="doc-tabs">
      <button><svg class="icon"><use href="#i-overview"/></svg>总览</button>
      <button><svg class="icon"><use href="#i-ob"/></svg>Main (OB1)</button>
      <button><svg class="icon"><use href="#i-fc"/></svg>COMMAND_...</button>
      <button><svg class="icon"><use href="#i-fc"/></svg>3#生物池 (F...</button>
      <button><svg class="icon"><use href="#i-db"/></svg>DATA交互_T...</button>
      <button class="active"><svg class="icon"><use href="#i-db"/></svg>DATA交互_T...</button>
    </div>
    <svg class="status-icon"><use href="#i-status"/></svg>
    <div class="status-text"><svg class="icon"><use href="#i-done"/></svg>项目 生化池 已成功保存。</div>
    <div class="busy"><i></i><i></i><i class="lit"></i><i></i><i></i><i></i><i></i></div>
  </footer>

  <div class="taskbar">
    <button class="start" aria-label="开始"><svg viewBox="0 0 16 16"><path d="M0 2.200l6.500-.9v6.200H0zM7.400 1.200L16 0v7.500H7.400zM0 8.400h6.500v6.300L0 13.800zM7.400 8.400H16V16l-8.600-1.200z" fill="#fff"/></svg></button>
    <label class="searchbox"><svg viewBox="0 0 16 16"><circle cx="10" cy="6" r="5" fill="none" stroke="#222" stroke-width="1.2"/><path d="M6.500 9.500L1 15" stroke="#222" stroke-width="1.2"/></svg><input type="text" placeholder="在这里输入你要搜索的内容"></label>
    <button class="sys" aria-label="Cortana"><svg viewBox="0 0 16 16"><circle cx="8" cy="8" r="6.6" fill="none" stroke="#fff" stroke-width="1.8"/></svg></button>
    <button class="sys" aria-label="任务视图"><svg viewBox="0 0 16 16"><path d="M1 .5v2h9v-2M1 15.500v-2h9v2M1 4.500h9v7H1zM13.500 1v3M13.500 6v9" fill="none" stroke="#fff"/><path d="M12.500 4h2v3h-2z" fill="#fff"/></svg></button>
    <button class="sys pinwheel" aria-label="浏览器"><svg viewBox="0 0 20 22"><g fill="#fff" stroke="#22353f" stroke-width=".8"><path d="M10 11C4 9 3 2 9 .500c5-.5 3 4 2 6z"/><path d="M10 11C4 9 3 2 9 .500c5-.5 3 4 2 6z" transform="rotate(60 10 11)"/><path d="M10 11C4 9 3 2 9 .500c5-.5 3 4 2 6z" transform="rotate(120 10 11)"/><path d="M10 11C4 9 3 2 9 .500c5-.5 3 4 2 6z" transform="rotate(180 10 11)"/><path d="M10 11C4 9 3 2 9 .500c5-.5 3 4 2 6z" transform="rotate(240 10 11)"/><path d="M10 11C4 9 3 2 9 .500c5-.5 3 4 2 6z" transform="rotate(300 10 11)"/></g></svg></button>
    <label class="ie-box"><svg class="ie" viewBox="0 0 18 18"><path d="M3.500 9.500h11c0-7-10.500-7-10.500 .5 0 6 8 6.500 10 2.500" fill="none" stroke="#2e9df0" stroke-width="2.8"/><path d="M1.500 16c-3-4 9-16.500 15-14.500" fill="none" stroke="#58b4f4" stroke-width="1.2"/></svg><span>▴</span><input type="text" placeholder="正泰交流接触器"><svg class="lens" viewBox="0 0 16 16"><circle cx="7" cy="7" r="5.8" fill="none" stroke="#888"/><path d="M11 11l4.500 4.500" stroke="#888"/></svg></label>
    <div class="apps">
      <button class="app grouped" aria-label="文件资源管理器"><svg viewBox="0 0 24 24"><path d="M1 3h9l2 3H1z" fill="#e89c10"/><path d="M1 5h22v16H1z" fill="#ffd45a"/><path d="M5 13h14v8h-3v-4H8v4H5z" fill="#3c94dc"/></svg></button>
      <button class="app" aria-label="Edge"><svg viewBox="0 0 24 24"><circle cx="12" cy="12" r="12" fill="url(#g-edge)"/><path d="M1 8C4-2 22-2 24 10c0 5-4 7-9 6 3-3 2-8-3-8C7 5 3 6 1 8z" fill="url(#g-edge2)"/><path d="M12 9c-4 1-5 6-2 9 3 2.500 8 2 11 0-4 .5-8-.5-7-4 2-2 0-5-2-5z" fill="#0d4f8c"/><path d="M11.500 10c2.500 0 3.500 2.500 2 4.500-1.500 2 2 3 5 2.500 3-.5 4 .5 2 2-4 0-9-1-9.500-4.500-.2-2 .5-3 .5-4.500z" fill="#24384a"/></svg></button>
      <button class="app" aria-label="设置"><svg viewBox="0 0 24 24"><circle cx="12" cy="12" r="5.5" fill="none" stroke="#fff" stroke-width="3"/><path d="M12 2.500v4M12 17.500v4M2.500 12h4M17.500 12h4M5.300 5.300l2.800 2.800M15.900 15.900l2.800 2.800M18.700 5.300l-2.800 2.800M8.100 15.900l-2.800 2.800" stroke="#fff" stroke-width="3"/></svg></button>
      <button class="app" aria-label="计算器"><svg viewBox="0 0 24 24"><path d="M3 0h18v24H3z" fill="#6c7880"/><path d="M5 2h14v4H5z" fill="#4cc8f4"/><path d="M5 8h4v4H5zM10 8h4v4h-4zM15 8h4v4h-4zM5 13h4v4H5zM10 13h4v4h-4zM5 18h4v4H5zM10 18h4v4h-4z" fill="#e4e8ec"/><path d="M15 13h4v9h-4z" fill="#1450a0"/></svg></button>
      <button class="app grouped" aria-label="AutoCAD"><svg viewBox="0 0 24 24"><path d="M0 0h24v24H0z" fill="#f4e4e0"/><path d="M3 20L10 3h5l5 17h-5l-1-4H9l-2 4zM10.500 12h3L12.500 7z" fill="#c01c24" fill-rule="evenodd"/></svg></button>
      <button class="app" aria-label="3ds Max"><svg viewBox="0 0 24 24"><path d="M0 0h24v24H0z" fill="#dff0f0"/><path d="M7 5c4-3 9-2 8 2-.5 3-3 3.500-4 3.500 4 0 6 2 4.500 5s-6 3-9 1" fill="none" stroke="#168c94" stroke-width="3.4"/><path d="M13 21h8" stroke="#168c94" stroke-width="2"/></svg></button>
      <button class="app current" aria-label="TIA Portal"><span class="tia-tile">TIA<br>V16</span></button>
    </div>
    <div class="tray">
      <svg class="tray-up" viewBox="0 0 12 12"><path d="M1 9l5-6 5 6" fill="none" stroke="#fff"/></svg>
      <svg class="tray-app" viewBox="0 0 16 16"><circle cx="8" cy="8" r="7.5" fill="#f0d820"/><path d="M8 .5c-9 2-9 13 0 15z" fill="#7cc83c"/><path d="M8 4.500v7M4.500 8h7" stroke="#1c9440" stroke-width="2"/></svg>
      <span class="ime">英</span><span class="wubi">五</span>
      <div class="clock"><span>10:43 周二</span><span>2021/8/24</span></div>
      <div class="notice"><svg viewBox="0 0 16 16"><path d="M0 0h16v12H6l-3 4v-4H0z" fill="#fff"/><path d="M3 3.500h10M3 6h10M3 8.500h7" stroke="#22304a"/></svg><b class="red">5</b></div>
      <div class="notice"><svg viewBox="0 0 16 16"><path d="M0 0h16v12H6l-3 4v-4H0z" fill="#fff"/><path d="M3 3.500h10M3 6h10M3 8.500h7" stroke="#22304a"/></svg><b class="round">1</b></div>
    </div>
  </div>

  <svg class="watermark" viewBox="0 0 580 140" aria-hidden="true"><text x="8" y="124">XINWEI</text></svg>

  <script src="script.js"></script>
</body>

</html>
```

FILE: styles.css
```css
* {
  box-sizing: border-box;
}

body {
  margin: 0;
  height: 100vh;
  display: flex;
  flex-direction: column;
  overflow: hidden;
  position: relative;
  background: #cbcbcb;
  color: #000;
  font-family: "Noto Sans", "Noto Sans CJK SC", sans-serif;
  font-size: 12px;
  line-height: 18px;
}

button,
input,
select {
  font: inherit;
  color: inherit;
}

button {
  padding: 0;
  border: 0;
  background: none;
  white-space: nowrap;
}

h1,
h2 {
  margin: 0;
  font-weight: bold;
}

i {
  font-style: normal;
}

.sprite {
  position: absolute;
  width: 0;
  height: 0;
}

.icon {
  width: 16px;
  height: 16px;
  flex: none;
  display: block;
}

.wicon {
  width: 12px;
  height: 12px;
  flex: none;
  display: block;
}

.wicon.narrow {
  width: 8px;
}

.spacer {
  flex: 1;
}

/* Title bar */
.titlebar {
  flex: none;
  height: 23px;
  display: flex;
  align-items: center;
  padding: 0 6px;
  background: linear-gradient(#858585, #4a4a4a 6px, #1b1b1b 7px);
  color: #fff;
  font-size: 14px;
  font-weight: 500;
}

.tia-badge {
  width: 17px;
  margin-right: 5px;
  font: bold 9px/8px "Liberation Sans", sans-serif;
  color: #b9c4ea;
}

.title {
  white-space: pre;
}

.blot {
  width: 74px;
  height: 19px;
  background: #2b2826;
}

.win-buttons {
  margin-left: auto;
  display: flex;
  gap: 6px;
}

/* Menu and main toolbar */
.topbar {
  flex: none;
  height: 50px;
  display: flex;
  justify-content: space-between;
}

.menu {
  height: 26px;
  display: flex;
  align-items: center;
  gap: 17px;
  padding: 2px 0 0 11px;
}

.toolbar,
.editor-tools,
.panel-tools,
.msg-tools {
  display: flex;
  align-items: center;
}

.toolbar {
  height: 23px;
  gap: 8px;
  padding-left: 12px;
}

.toolbar .label.off {
  color: #7d7d7d;
}

.toolbar .label {
  margin: 0 2px 0 -1px;
}

.dd {
  width: 8px;
  height: 16px;
  margin-left: -5px;
}

.sep {
  width: 0;
  height: 22px;
  border-left: 1px dotted #8a8a8a;
}

.toolbar .sep {
  margin: 0 -2px;
}

.project-search {
  width: 120px;
  height: 18px;
  margin-right: -1px;
  padding: 0 3px;
  border: 1px solid #7a7a7a;
  background: #fff;
}

.project-search::placeholder {
  color: #777;
}

.brand {
  padding: 12px 24px 0 0;
  text-align: right;
  font-family: "Open Sans", sans-serif;
}

.brand-name {
  padding-right: 24px;
  font-size: 14px;
  font-weight: 600;
}

.brand-portal {
  margin-top: -3px;
  font-size: 17px;
  font-weight: 600;
  color: #6b6b6b;
}

/* Workspace */
.workspace {
  flex: 1;
  min-height: 0;
  display: flex;
  border-top: 1px solid #1a2032;
  background: #1a2032;
}

.rail {
  flex: none;
  background: #b0b0b0;
}

.rail-left {
  width: 23px;
  margin-right: 1px;
  border-top: 25px solid #b0b0b0;
  background: linear-gradient(#fff, #fff) 0 0 / 100% 1px no-repeat, linear-gradient(#fff, #fff) 0 220px / 100% 1px no-repeat, #b0b0b0;
}

.rail-label {
  margin: 84px 0 0 1px;
  writing-mode: vertical-rl;
  transform: rotate(180deg);
  color: #fff;
  font-size: 14px;
  font-weight: bold;
  line-height: 20px;
}

.left {
  flex: none;
  width: 396px;
  margin-right: 3px;
  display: flex;
  flex-direction: column;
  min-height: 0;
}

.panel-head {
  flex: none;
  height: 27px;
  display: flex;
  align-items: center;
  gap: 8px;
  padding: 0 6px;
  background: #b0b0b0;
  border-bottom: 3px solid #ff9e00;
  color: #fff;
  font-size: 14px;
  font-weight: 600;
}

.panel-head span {
  flex: 1;
}

.tabstrip {
  flex: none;
  height: 25px;
  display: flex;
  align-items: flex-end;
  gap: 1px;
  padding-left: 6px;
  background: #cbcbcb;
  border-bottom: 1px solid #7c7c7c;
}

.tab {
  width: 63px;
  height: 21px;
  padding-left: 11px;
  border: 1px solid #7c7c7c;
  border-bottom: 0;
  background: linear-gradient(#d8d8d8, #c6c6c6);
  color: #555;
  font-size: 14px;
  font-weight: 500;
  line-height: 18px;
  text-align: left;
}

.tab.wide {
  width: 95px;
}

.tab.active {
  height: 22px;
  margin-bottom: -1px;
  background: linear-gradient(#fff, #e9e9e9);
  color: #000;
  font-weight: 600;
}

.tool {
  padding: 3px;
  border: 1px solid transparent;
}

.tool.pressed {
  border-color: #2f62d0;
  background: #f6f8ff;
  border-radius: 2px;
}

.panel-tools {
  flex: none;
  height: 27px;
  padding: 0 5px 0 4px;
  gap: 2px;
  background: #e9e9e9;
}

.panel-tools .tool.pressed {
  padding: 2px;
}

.panel-tools .sep {
  margin-right: 2px;
}

.band {
  flex: none;
  height: 21px;
  background: #c3c3c3;
}

/* Project tree */
.tree-area {
  flex: 1;
  min-height: 0;
  display: flex;
  background: #f0f0f0;
}

.tree {
  flex: 1;
  min-width: 0;
  overflow: hidden;
}

.node {
  height: 19px;
  display: flex;
  align-items: stretch;
  border-bottom: 1px solid #fff;
  background: #f0f0f0;
}

.node.strong {
  background: #e0e0e0;
}

.node.selected {
  background: #d2d7de;
}

.node.selected .node-main {
  outline: 1px dashed #777;
  outline-offset: -1px;
}

.node-main {
  flex: 1;
  min-width: 0;
  display: flex;
  align-items: center;
  gap: 4px;
  border-right: 1px solid #b4b4b4;
  white-space: nowrap;
}

.node.bold .node-main {
  font-weight: 600;
}

.lv0 { padding-left: 3px; }
.lv1 { padding-left: 21px; }
.lv2 { padding-left: 39px; }
.lv3 { padding-left: 57px; }

.twist {
  flex: none;
  width: 12px;
  display: flex;
  justify-content: center;
}

.twist.open::before {
  content: "";
  border: 4px solid transparent;
  border-width: 5px 4px 0;
  border-top-color: #000;
}

.twist.closed::before {
  content: "";
  border: 4px solid transparent;
  border-width: 4px 0 4px 5px;
  border-left-color: #000;
}

.state {
  flex: none;
  width: 20px;
  display: flex;
  align-items: center;
  justify-content: center;
  border-right: 1px solid #fff;
}

.state svg {
  width: 14px;
  height: 14px;
}

/* Scroll bars */
.vscroll,
.hscroll {
  flex: none;
  display: flex;
  gap: 1px;
  background: #c3c3c3;
}

.vscroll {
  width: 18px;
  flex-direction: column;
}

.hscroll {
  height: 18px;
}

.vscroll.over {
  position: absolute;
  right: 0;
  top: 19px;
  bottom: 0;
}

.sbtn {
  flex: none;
  width: 18px;
  height: 18px;
  display: flex;
  align-items: center;
  justify-content: center;
  border: 1px solid #8c8c8c;
  background: linear-gradient(135deg, #fdfdfd, #cfcfcf);
  color: #4a4a4a;
}

.sbtn.up svg { transform: rotate(180deg); }
.sbtn.prev svg { transform: rotate(90deg); }
.sbtn.next svg { transform: rotate(-90deg); }

.thumb {
  display: flex;
  align-items: center;
  justify-content: center;
  border: 1px solid #8c8c8c;
  box-shadow: inset 0 0 0 1px #fff;
}

.vscroll .thumb {
  background: linear-gradient(90deg, #f0f0f0, #cacaca);
}

.hscroll .thumb {
  flex: 1;
  background: linear-gradient(#ececec, #d0d0d0);
}

.hscroll .grip {
  width: 8px;
  height: 8px;
  background: repeating-linear-gradient(90deg, #666 0 1px, transparent 1px 2px);
}

.vscroll .grip {
  width: 8px;
  height: 8px;
  background: repeating-linear-gradient(#666 0 1px, transparent 1px 2px);
}

.tree-thumb {
  height: 36%;
}

.tree-hscroll {
  padding-right: 18px;
}

.tree-hscroll .thumb {
  margin-right: 8px;
}

/* Detail view */
.detail {
  flex: none;
  border-top: 3px solid #1a2032;
}

.section-head {
  display: flex;
  align-items: center;
  gap: 4px;
  height: 21px;
  background: linear-gradient(#f4f4f4, #d0d0d0);
  border-bottom: 1px solid #7c7c7c;
  font-size: 14px;
}

.fold {
  width: 21px;
  height: 20px;
  display: flex;
  align-items: center;
  justify-content: center;
  border-right: 1px solid #8c8c8c;
}

.detail-strip {
  height: 25px;
  background: #cbcbcb;
  border-bottom: 1px solid #7c7c7c;
}

.detail-tools {
  height: 27px;
  background: #e9e9e9;
}

.detail-area {
  height: 147px;
  position: relative;
  overflow: hidden;
}

.detail-thumb {
  height: 22px;
}

.detail-hscroll {
  padding-right: 18px;
}

.detail-hscroll .thumb {
  flex: 0 0 300px;
}

/* Tables */
.grid {
  width: 100%;
  table-layout: fixed;
  border-collapse: separate;
  border-spacing: 0;
}

.grid th {
  height: 19px;
  padding: 0 3px;
  border: 1px solid #a4a4a4;
  border-width: 1px 1px 1px 0;
  background: linear-gradient(#f2f2f2, #dcdcdc 55%, #c9c9c9 56%, #e2e2e2);
  font-weight: normal;
  text-align: left;
  line-height: 16px;
  white-space: nowrap;
  overflow: hidden;
}

.grid td {
  height: 19px;
  padding: 1px 3px 0;
  border-bottom: 1px solid #fff;
  background: #f0f0f0;
  line-height: 17px;
  white-space: nowrap;
  overflow: hidden;
}

.detail-table .d-icon { width: 19px; }
.detail-table .d-name { width: 160px; }
.detail-table .d-off { width: 80px; }
.detail-table .d-type { width: 80px; }
.detail-table .d-vis { width: 40px; }

.detail-table th {
  padding-left: 4px;
}

.detail-table td {
  padding: 1px 4px 0;
}

.detail-table td:first-child {
  padding: 1px 1px 0;
}

.detail-table td:nth-child(2) {
  padding: 1px 0 0 23px;
}

.detail-table tr.selected td {
  background: #d2d7de;
}

.focus,
.detail-table tr.selected td:nth-child(2) {
  outline: 1px dashed #777;
  outline-offset: -1px;
}

.type-cell {
  position: relative;
}

.type-cell button {
  position: absolute;
  top: 0;
  right: -3px;
  height: 17px;
  padding: 1px;
  border: 1px solid #8c8c8c;
  border-radius: 2px;
  background: #ddd;
}

.type-cell button svg {
  display: block;
  width: 12px;
  height: 13px;
}

/* Editor */
.center {
  flex: 1;
  min-width: 0;
  display: flex;
  flex-direction: column;
  margin-right: 3px;
}

.editor {
  flex: 1;
  min-height: 0;
  display: flex;
  flex-direction: column;
  margin-bottom: 3px;
  background: #c8c8c8;
}

.editor-head {
  flex: none;
  height: 27px;
  display: flex;
  align-items: center;
  padding: 0 6px 3px 5px;
  background: #ff9e00;
  color: #fff;
}

.crumbs {
  display: flex;
  align-items: center;
  gap: 11px;
  font-size: 14px;
  font-weight: 600;
}

.crumbs i {
  border: 4px solid transparent;
  border-width: 4px 0 4px 5px;
  border-left-color: #fff;
}

.editor-tools {
  flex: none;
  height: 27px;
  gap: 8px;
  padding: 0 14px 0 6px;
  background: #e9e9e9;
}

.editor-tools .sep {
  margin: 0 -2px;
}

.editor-tools .tool {
  margin: 0 -3px;
}

.editor-tools .label {
  margin: 0 3px 0 2px;
}

.editor-title {
  flex: none;
  height: 21px;
  padding-left: 25px;
  background: #d6d6d6;
  font-size: 14px;
  font-weight: 600;
  line-height: 20px;
}

.table-area {
  flex: 1;
  min-height: 0;
  overflow: hidden;
}

.c-num { width: 25px; }
.c-icon { width: 18px; }
.c-name { width: 171px; }
.c-type { width: 120px; }
.c-off { width: 60px; }
.c-start { width: 100px; }
.c-mon { width: 120px; }
.c-keep { width: 70px; }
.c-opc { width: 80px; }
.c-h { width: 50px; }
.c-inhmi { width: 70px; }
.c-set { width: 70px; }
.c-sup { width: 63px; }

.data-table th:nth-child(3) {
  padding-left: 5px;
}

.data-table td {
  border-right: 1px solid #fff;
}

.data-table td:first-child {
  background: #cbcbcb;
  color: #777;
}

.data-table td:nth-child(2) {
  padding: 1px 1px 0;
}

.data-table td:nth-child(3) {
  border-right-color: #c0c0c0;
}

.data-table .static td,
.data-table .blank td {
  background-color: #e0e0e0;
}

.data-table .static td:first-child,
.data-table .blank td:first-child {
  background-color: #cbcbcb;
}

.data-table .current td:first-child {
  background: #bcc8d8;
}

.name {
  display: flex;
  align-items: center;
}

.name::before {
  content: "";
  width: 5px;
  height: 5px;
  margin: 0 30px 0 4px;
  background: #2348c8;
}

.static .name::before {
  width: 0;
  height: 0;
  margin: 0 10px 0 3px;
  border: 4px solid transparent;
  border-width: 5px 4px 0;
  border-top-color: #000;
  background: none;
}

.data-table .current td:nth-child(3) {
  background: #fff;
  box-shadow: inset 0 0 0 1px #2c5cc4;
}

.data-table .dim {
  background: #e0e0e0;
}

.data-table .start {
  color: #888;
}

.data-table .live {
  background: #ffc766;
}

.data-table .tick {
  padding: 0;
  text-align: center;
}

/* Tick boxes and radios */
input[type="checkbox"],
input[type="radio"] {
  appearance: none;
  flex: none;
  width: 15px;
  height: 15px;
  margin: 0;
  border: 1px solid #666;
  border-radius: 2px;
  background: linear-gradient(#f8f8f8, #cdcdcd 60%, #ececec);
}

input[type="checkbox"]:checked::before {
  content: "";
  display: block;
  width: 13px;
  height: 13px;
  background: #0f3f9c;
  clip-path: polygon(12% 42%, 32% 36%, 44% 56%, 78% 12%, 96% 20%, 50% 88%, 36% 88%);
}

input[type="radio"] {
  border-radius: 50%;
}

input[type="radio"]:checked {
  background: radial-gradient(#0c3f9c 0 2px, #6cd8f8 3px, #2c9ce0 5px, #e8f8ff 6px);
}

input[type="checkbox"]:disabled,
input[type="radio"]:disabled {
  border-color: #b4b4b4;
  background: linear-gradient(#fbfbfb, #ececec);
}

input[type="radio"]:disabled:checked {
  background: radial-gradient(#888 0 2px, #f0f0f0 3px);
}

input[type="checkbox"]:disabled:checked::before {
  background: #999;
}

.tick input {
  display: block;
  width: 15px;
  height: 15px;
  margin: 0 auto;
}

.tick input:checked {
  border-color: #3f5870;
  background: linear-gradient(#d8ecff, #8cc8f8 45%, #40d8f8);
}

.editor-hscroll {
  padding-left: 25px;
}

.editor-hscroll .thumb {
  margin-right: 27px;
}

/* Inspector */
.inspector {
  flex: none;
  background: #f0f0f0;
}

.insp-head {
  height: 27px;
  display: flex;
  align-items: flex-end;
  justify-content: flex-end;
  gap: 1px;
  background: #b0b0b0;
  border-bottom: 3px solid #ff9e00;
}

.insp-tab {
  width: 75px;
  height: 21px;
  display: flex;
  align-items: center;
  gap: 3px;
  padding: 0 2px;
  border: 1px solid #7c7c7c;
  border-bottom: 0;
  background: linear-gradient(#dcdcdc, #c6c6c6);
  color: #444;
  font-size: 14px;
  font-weight: 600;
}

.insp-tab.active {
  height: 24px;
  margin-bottom: -3px;
  padding-bottom: 3px;
  border: 0;
  border-top: 2px solid #ff9e00;
  background: #ececec;
  color: #000;
}

.insp-icons {
  align-self: center;
  display: flex;
  gap: 6px;
  margin: 0 5px 0 19px;
}

.tabstrip.sub {
  height: 25px;
}

.msg-tools {
  height: 27px;
  gap: 2px;
  padding-left: 4px;
  background: #e9e9e9;
}

.msg-tools .tool {
  padding: 2px;
}

.msg-filter {
  width: 200px;
  margin-left: 2px;
}

.combo {
  display: block;
  height: 18px;
  padding: 0 20px 0 4px;
  appearance: none;
  border: 1px solid #808080;
  border-radius: 0;
  background: url("data:image/svg+xml,%3Csvg xmlns='http://www.w3.org/2000/svg' width='16' height='16'%3E%3Cpath d='M0 0h16v16H0z' fill='%23dcdcdc'/%3E%3Cpath d='M0 0h1v16H0z' fill='%23808080'/%3E%3Cpath d='M5 6h7L8.500 10z'/%3E%3C/svg%3E") right center no-repeat #fff;
  line-height: 16px;
}

.msg-area {
  position: relative;
  padding-top: 20px;
  height: 64px;
}

.m-flag { width: 29px; }
.m-goto { width: 51px; }
.m-q { width: 50px; }
.m-date { width: 73px; }
.m-time { width: 155px; }
.m-rest { width: 267px; }
.m-end { width: 17px; }

.msg-table th.faint {
  padding-left: 6px;
  color: #3a5a80;
}

.msg-table td {
  background: #d2d7de;
}

.msg-table td.focus {
  padding: 1px 6px 0;
}

.msg-table td.plain {
  background: #f0f0f0;
}

.msg-table .msg-text {
  padding-left: 22px;
}

.vscroll.msg-scroll {
  width: 17px;
  top: 40px;
}

.msg-scroll .sbtn {
  width: 17px;
  height: 12px;
}

/* Tasks */
.tasks {
  flex: none;
  width: 302px;
  margin-right: 1px;
  background: #e9e9e9;
}

.options {
  height: 25px;
  padding-left: 6px;
  border-top: 3px solid #e0e0e0;
  border-bottom: 1px solid #7c7c7c;
  background: linear-gradient(#fff, #dcdcdc);
  font-size: 14px;
  line-height: 20px;
}

.task-tools {
  height: 27px;
  display: flex;
  justify-content: flex-end;
  align-items: center;
  padding-right: 5px;
}

.section-head.ruled {
  height: 24px;
  border-top: 3px solid #909090;
}

.find {
  padding: 18px 12px 12px;
}

.caption {
  display: block;
  height: 19px;
  padding-left: 3px;
}

.find .combo,
.reference .combo {
  width: 278px;
}

.choices {
  display: flex;
  flex-direction: column;
  padding-top: 6px;
}

.choices label {
  height: 24px;
  display: flex;
  align-items: center;
  gap: 4px;
}

.choices label:has(:disabled) {
  color: #888;
}

.direction {
  padding-top: 8px;
}

.buttons {
  display: flex;
  gap: 6px;
  width: 186px;
  padding-top: 2px;
}

.buttons button {
  flex: 1;
  height: 20px;
  border: 1px solid #888;
  border-radius: 1px;
  background: linear-gradient(#fbfbfb, #dedede);
  color: #888;
}

.replace {
  margin-top: 18px;
}

.scope {
  padding-top: 6px;
}

.lang {
  padding: 13px 12px 11px;
  border-bottom: 1px solid #909090;
}

.lang .caption {
  height: 23px;
}

.lang-row {
  display: flex;
  gap: 6px;
}

.lang-row .combo {
  flex: 1;
}

.lang .combo {
  height: 19px;
}

.add-lang {
  width: 20px;
  height: 19px;
  padding: 1px;
  border: 1px solid #8c8c8c;
  background: #ddd;
}

.lang.reference {
  border: 0;
}

.preview {
  height: 218px;
  margin-top: 7px;
  border: 1px solid #8c8c8c;
}

/* Right rail */
.rail-right {
  width: 24px;
  padding-top: 30px;
  position: relative;
}

.side-tab {
  width: 21px;
  height: 60px;
  display: flex;
  flex-direction: column;
  align-items: center;
  gap: 3px;
  margin-bottom: 2px;
  padding-top: 3px;
  border: 1px solid #7c7c7c;
  border-left: 0;
  background: linear-gradient(90deg, #d8d8d8, #c8c8c8);
  color: #666;
  font-size: 14px;
  font-weight: 600;
}

.side-tab span {
  writing-mode: vertical-rl;
  text-orientation: sideways;
}

.side-tab.active {
  height: 74px;
  background: #ececec;
  color: #000;
}

.side-tab.addin {
  padding-top: 12px;
}

.meter {
  position: absolute;
  right: 1px;
  top: 377px;
  width: 10px;
  height: 59px;
  padding: 18px 1px 1px;
  border: 1px solid #ddd;
  border-radius: 5px;
  background: #484848;
}

.meter i {
  display: block;
  height: 38px;
  background: repeating-linear-gradient(#1fd65c 0 2px, #1c6a38 2px 3px);
}

/* Portal bar */
.portalbar {
  flex: none;
  height: 29px;
  display: flex;
  align-items: center;
  background: #1c1c1c;
  color: #fff;
}

.portal-link {
  width: 181px;
  display: flex;
  align-items: center;
  gap: 10px;
  padding-left: 35px;
  font-size: 14px;
  font-weight: 600;
}

.doc-tabs {
  flex: 1;
  display: flex;
  gap: 3px;
}

.doc-tabs button {
  width: 113px;
  height: 20px;
  display: flex;
  align-items: center;
  gap: 5px;
  padding: 0 3px;
  background: #c4c4c4;
  color: #222;
}

.doc-tabs .active {
  background: #fff;
  color: #000;
  font-weight: 600;
}

.status-icon {
  width: 20px;
  height: 24px;
  margin-right: 10px;
}

.status-text {
  width: 260px;
  display: flex;
  align-items: center;
  gap: 4px;
}

.busy {
  display: flex;
  gap: 1px;
  margin-right: 39px;
}

.busy i {
  width: 3px;
  height: 13px;
  background: #f05a1c;
}

.busy .lit {
  background: #dfe6ff;
}

/* Windows taskbar */
.taskbar {
  flex: none;
  height: 40px;
  display: flex;
  align-items: center;
  background: linear-gradient(90deg, #22353f, #233b46 60%, #20304a 85%, #1f2c48);
  color: #fff;
}

.start {
  width: 48px;
}

.start svg,
.sys svg {
  width: 16px;
  height: 16px;
}

.taskbar svg {
  display: block;
  margin: 0 auto;
}

.searchbox {
  width: 344px;
  height: 40px;
  display: flex;
  align-items: center;
  gap: 12px;
  padding: 0 12px;
  background: #f2f2f2;
  border: 1px solid #ccc;
}

.searchbox svg {
  width: 16px;
  height: 16px;
  margin: 0;
}

.searchbox input,
.ie-box input {
  flex: 1;
  min-width: 0;
  padding: 0;
  border: 0;
  background: none;
  font-size: 14px;
}

.searchbox input::placeholder {
  color: #333;
}

.sys {
  width: 49px;
}

.sys.pinwheel svg {
  width: 20px;
  height: 22px;
}

.ie-box {
  width: 248px;
  height: 34px;
  display: flex;
  align-items: center;
  gap: 4px;
  padding: 0 7px 0 5px;
  border: 1px solid #777;
  background: #3a3a3a;
  color: #999;
}

.ie-box input {
  font-size: 12px;
}

.ie-box input::placeholder {
  color: #777;
}

.ie {
  width: 18px;
  height: 18px;
}

.lens {
  width: 16px;
  height: 16px;
}

.apps {
  display: flex;
  gap: 9px;
  height: 40px;
  margin-left: 10px;
}

.app {
  width: 40px;
  border-bottom: 2px solid #76b9ed;
}

.app svg {
  width: 24px;
  height: 24px;
}

.app.grouped {
  border-image: linear-gradient(90deg, #76b9ed 80%, #4c83ac 80%) 2;
  border-width: 0 0 2px;
  border-style: solid;
}

.app.current {
  width: 48px;
  margin-left: -4px;
  background: #4e6069;
}

.tia-tile {
  display: block;
  width: 24px;
  height: 24px;
  margin: 0 auto;
  background: #33384e;
  color: #fff;
  font: bold 12px/12px "Liberation Sans", sans-serif;
}

.tray {
  margin-left: auto;
  display: flex;
  align-items: center;
  gap: 8px;
  padding-right: 12px;
}

.tray-up {
  width: 12px;
  height: 12px;
}

.tray-app {
  width: 16px;
  height: 16px;
}

.ime {
  font-size: 16px;
}

.wubi {
  width: 15px;
  height: 15px;
  margin: 0 9px 0 5px;
  border: 1px solid #fff;
  line-height: 13px;
  text-align: center;
}

.clock {
  width: 72px;
  display: flex;
  flex-direction: column;
  text-align: center;
  line-height: 20px;
}

.notice {
  position: relative;
  width: 30px;
}

.notice svg {
  width: 16px;
  height: 16px;
  margin: 0;
}

.notice b {
  position: absolute;
  left: 6px;
  top: 7px;
  width: 13px;
  height: 14px;
  background: #e01020;
  font-size: 11px;
  font-weight: normal;
  line-height: 14px;
  text-align: center;
}

.notice .round {
  width: 16px;
  height: 16px;
  border: 1px solid #9aa4b0;
  border-radius: 50%;
  background: #28303c;
}

.watermark {
  position: absolute;
  right: 61px;
  bottom: 0;
  width: 580px;
  height: 140px;
  overflow: visible;
  pointer-events: none;
}

.watermark text {
  font-family: "Open Sans", sans-serif;
  font-size: 165px;
  fill: #fff;
  stroke: #fff;
  stroke-width: 11px;
  stroke-linejoin: round;
  filter: url(#emboss);
}
```

FILE: script.js
```js
const icon = (name) => `<svg class="icon"><use href="#i-${name}"/></svg>`;

// "|" is a separator, "v" a small drop-down mark, "=" a button label
function buildToolbar(id, items) {
  document.getElementById(id).innerHTML = items.map((item) => {
    if (item === '|') return '<span class="sep"></span>';
    if (item === 'v') return '<svg class="dd"><use href="#i-drop"/></svg>';
    if (item === ' ') return '<span class="spacer"></span>';
    if (item[0] === '=') return `<button class="label">${item.slice(1)}</button>`;
    if (item[0] === '-') return `<button class="label off" disabled>${item.slice(1)}</button>`;
    if (item[0] === '*') return `<button class="tool pressed" aria-label="${item.slice(1)}">${icon(item.slice(1))}</button>`;
    if (item === 'search') return '<input class="project-search" type="text" aria-label="搜索" placeholder="&lt;在项目中搜索&gt;">';
    return `<button aria-label="${item}">${icon(item)}</button>`;
  }).join('');
}

buildToolbar('main-toolbar', ['new', 'open', 'save', '-保存项目', '|', 'print', '|', 'cut', 'copy', 'paste', 'x', '|',
  'undo', 'v', 'redo', 'v', '|', 'compile', 'down', 'up', 'sim', 'rt', '|', 'plug-g', '-转至在线', 'plug', '=转至离线', '|',
  'nethelp', 'start', 'stop', '|', 'xref', '|', 'splith', 'splitv', '|', 'search', 'find']);

buildToolbar('editor-toolbar', ['addrow', 'addrow2', '|', 'dbundo', 'dbok', 'lines', '|', '*glasses', '|', '=保持实际值', 'dblock', '|',
  '=快照', 'camup', 'camdn', '|', '=将快照值复制到起始值中', 'dbleft', 'dbleftg', '|', '=将起始值加载为实际值', 'dbdown', 'dbdowng', ' ', 'layout']);

// level, twist, icon, text, states (c = tick, d = dot), row class
const nodes = [
  [0, 'open', 'page', '生化池', 'cd', 'strong'],
  [1, '', 'add', '添加新设备', '', ''],
  [1, '', 'net', '设备和网络', '', ''],
  [1, 'open', 'plc', 'PLC_1 [CPU 1515-2 PN]', 'cd', 'strong bold'],
  [2, '', 'conf', '设备组态', '', ''],
  [2, '', 'diag', '在线和诊断', '', ''],
  [2, 'closed', 'unit', '软件单元', '', ''],
  [2, 'open', 'blocks', '程序块', 'd', ''],
  [3, '', 'add', '添加新块', '', ''],
  [3, '', 'ob', 'Main [OB1]', 'd', ''],
  [3, '', 'fc', '3#二沉池 [FC5]', 'd', ''],
  [3, '', 'fc', '3#生物池 [FC1]', 'd', ''],
  [3, '', 'fc', '4#二沉池 [FC6]', 'd', ''],
  [3, '', 'fc', '4#生物池 [FC4]', 'd', ''],
  [3, '', 'fc', 'AUTOCONTROL [FC2]', 'd', ''],
  [3, '', 'fc', 'COMMAND_RESET [FC3]', 'd', ''],
  [3, '', 'fc', 'CONVERT_AI [FC9]', 'd', ''],
  [3, '', 'fc', 'CONVERT_AO [FC10]', 'd', ''],
  [3, '', 'fc', 'CONVERT_生物池_推进器_搅拌器_MANU...', 'd', ''],
  [3, '', 'fc', '二期提升泵池 [FC8]', 'd', ''],
  [3, '', 'fc', '回流污泥泵池 [FC7]', 'd', ''],
  [3, '', 'db', 'DATA_量程 [DB5]', 'd', ''],
  [3, '', 'db', 'DATA交互_FROMPC_AI [DB4]', 'd', ''],
  [3, '', 'db', 'DATA交互_FROMPC_BIT [DB2]', 'd', ''],
  [3, '', 'db', 'DATA交互_TOPC_AI [DB3]', 'd', 'selected'],
  [3, '', 'db', 'DATA交互_TOPC_BIT [DB1]', 'd', ''],
  [3, 'closed', 'sysblocks', '系统块', 'd', ''],
  [2, 'closed', 'tech', '工艺对象', '', ''],
  [2, 'closed', 'ext', '外部源文件', '', ''],
  [2, 'closed', 'var', 'PLC 变量', 'd', ''],
  [2, 'closed', 'types', 'PLC 数据类型', '', '']
];

document.getElementById('tree').innerHTML = nodes.map(([level, twist, ico, text, states, cls]) => `
  <div class="node ${cls}">
    <div class="node-main lv${level}"><span class="twist ${twist}"></span>${icon(ico)}<span>${text}</span></div>
    <span class="state">${states.includes('c') ? '<svg><use href="#i-ok"/></svg>' : ''}</span>
    <span class="state">${states.includes('d') ? '<svg><use href="#i-dot"/></svg>' : ''}</span>
  </div>`).join('');

// name, monitored value, comment
const tags = [
  ['S_Concentration_3#...', '0.8092956', 'TOPC_AI'],
  ['S_Concentration_3#...', '5.59273', '浓度'],
  ['S_Concentration_4#...', '6.277692', ''],
  ['S_Concentration_4#...', '0.6216656', ''],
  ['S_Concentration_3#...', '2553.124', ''],
  ['S_Concentration_4#...', '2896.283', ''],
  ['S_Concentration_3#...', '0.176327', ''],
  ['S_Concentration_4#...', '0.1469391', ''],
  ['S_Frequency_3#生物...', '26.49426', '频率'],
  ['S_Frequency_3#生物...', '0.0', ''],
  ['S_Frequency_4#生物...', '25.1605', ''],
  ['S_Frequency_4#生物...', '0.0', ''],
  ['S_Frequency_回流污...', '50.33231', ''],
  ['S_FLOW_RATE_剩余...', '0.0', '瞬时流量'],
  ['S_FLOW_RATE_回流...', '0.0', '瞬时流量'],
  ['S_DEPTH_回流污泥...', '0.0', '深度'],
  ['S_DEPTH_二期提升...', '0.0', '深度'],
  ['S_FLOW_RATE_二期...', '0.0', '瞬时流量'],
  ['S_DEPTH_二期提升...', '0.0', '深度']
];

const listButton = '<button aria-label="选择类型"><svg><use href="#i-list"/></svg></button>';
const tick = (attr, label) => `<td class="tick"><input type="checkbox" ${attr} aria-label="${label}"></td>`;

let rows = `<tr class="static"><td>1</td><td>${icon('tag')}</td><td><div class="name">Static</div></td><td></td><td></td><td></td><td></td>
  ${tick('disabled', '保持')}${tick('disabled', 'HMI/OPC 访问')}${tick('disabled', 'HMI 写入')}${tick('disabled', 'HMI 可见')}${tick('disabled', '设定值')}<td></td><td></td></tr>`;

tags.forEach(([name, value, comment], i) => {
  rows += `<tr class="${i === 0 ? 'current' : ''}"><td>${i + 2}</td><td>${icon('tag')}</td><td><div class="name">${name}</div></td>
    <td><div class="type-cell">Real${i === 0 ? listButton : ''}</div></td><td class="dim">${i * 4}.0</td><td class="start">0.0</td><td class="live">${value}</td>
    ${tick('', '保持')}${tick('checked', 'HMI/OPC 访问')}${tick('checked', 'HMI 写入')}${tick('checked', 'HMI 可见')}${tick('', '设定值')}<td class="dim"></td><td>${comment}</td></tr>`;
});

// Empty rows fill the rest of the editor
for (let i = 0; i < 16; i++) {
  rows += `<tr class="blank">${'<td></td>'.repeat(14)}</tr>`;
}
document.getElementById('data-rows').innerHTML = rows;

document.getElementById('detail-rows').innerHTML = [3, 3, 4, 4, 3, 4, 3].map((n, i) => `
  <tr class="${i === 0 ? 'selected' : ''}"><td>${icon('tag')}</td><td>S_Concentration_${n}#生...</td><td>${i * 4}.0</td>
  <td><div class="type-cell">Real${i === 0 ? listButton : ''}</div></td><td>True</td><td></td></tr>`).join('');
```
